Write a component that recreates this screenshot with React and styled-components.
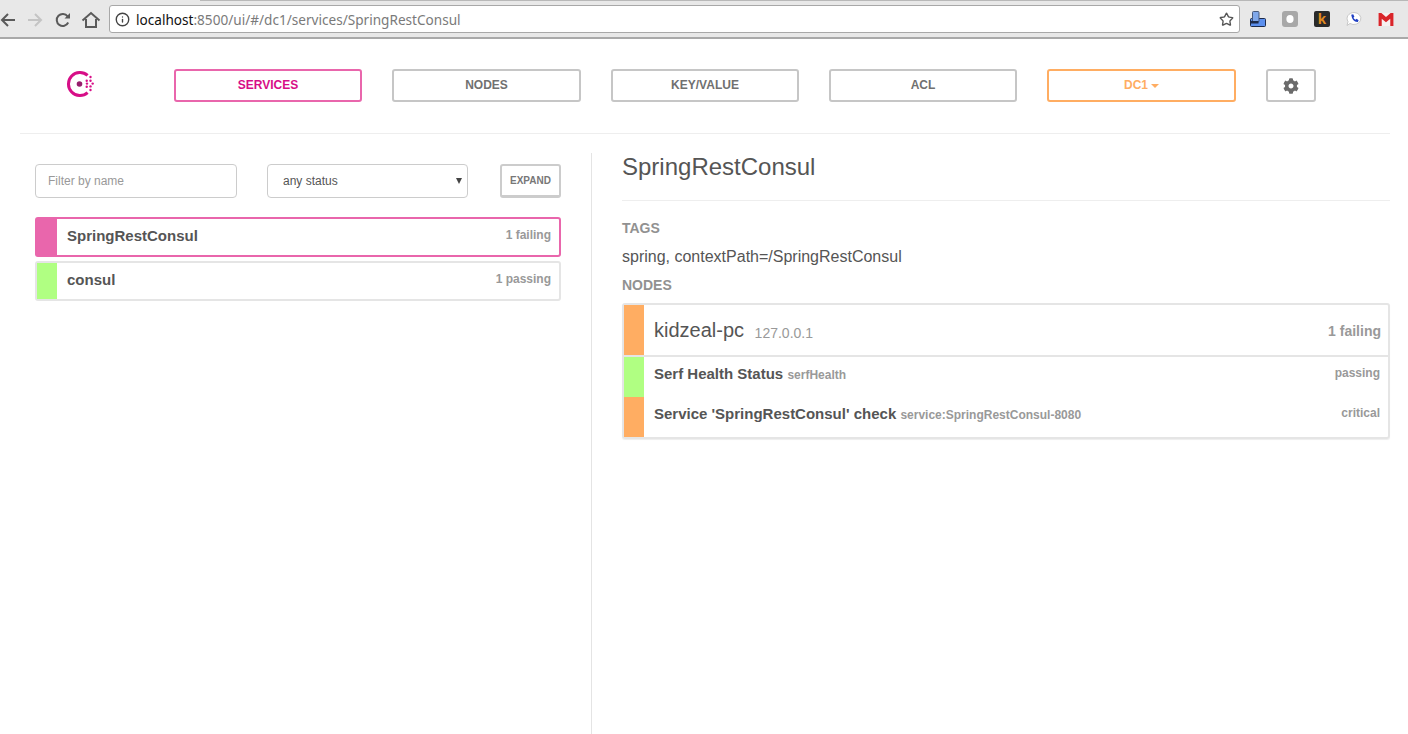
import React from "react";
import styled, { createGlobalStyle } from "styled-components";
import { Info, Star } from "lucide-react";
import { FaCog } from "react-icons/fa";

const Global = createGlobalStyle`
  html, body { margin: 0; padding: 0; background: #fff; }
  body { font-family: "Liberation Sans", Arial, sans-serif; color: #555; overflow: hidden; }
  * { box-sizing: border-box; }
`;

const Page = styled.div`
  width: 1408px;
  height: 734px;
  overflow: hidden;
`;

/* browser chrome */
const BrowserBar = styled.div`
  position: relative;
  height: 39px;
  background: #e8e8e8;
  border-top: 1px solid #b8b8b8;
  border-bottom: 2px solid #a9a9a9;
  display: flex;
  align-items: center;
  /* the active tab sits over the top line */
  &::before {
    content: "";
    position: absolute;
    left: 0;
    top: -1px;
    width: 200px;
    height: 1px;
    background: #e8e8e8;
  }
`;

const NavIcons = styled.div`
  width: 110px;
  margin-left: -1px;
  flex: none;
  display: flex;
  align-items: center;
  gap: 12px;
  padding: 1px 0 0 0;
`;

const NavGlyph = styled.svg`
  width: 16px;
  height: 16px;
  flex: none;
  fill: none;
  stroke: ${(p) => p.$color || "#5a5a5a"};
  stroke-width: 2;
`;

const UrlBox = styled.div`
  width: 1131px;
  height: 28px;
  flex: none;
  background: #fff;
  border: 1px solid #a8a8a8;
  border-radius: 3px;
  display: flex;
  align-items: center;
  padding: 0 5px;
  font-family: "Noto Sans", sans-serif;
  font-size: 13.6px;
`;

const Url = styled.span`
  flex: 1;
  margin-left: 6px;
  color: #7a7a7a;
  b { font-weight: 400; color: #111; }
`;

const Extensions = styled.div`
  flex: 1;
  display: flex;
  align-items: center;
  gap: 16px;
  padding-left: 10px;
`;

const ExtIcon = styled.svg`
  width: 16px;
  height: 16px;
  flex: none;
`;

const KIcon = styled.div`
  width: 16px;
  height: 16px;
  flex: none;
  border-radius: 2px;
  background: #2a2a2a;
  color: #e08a1e;
  font: 700 15px/15px "Liberation Sans", sans-serif;
  text-align: center;
`;

/* consul nav */
const Header = styled.header`
  margin: 0 18px 0 20px;
  height: 95px;
  padding-top: 30px;
  border-bottom: 1px solid #eee;
  display: flex;
  align-items: flex-start;
`;

const LogoWrap = styled.div`
  width: 154px;
  flex: none;
  padding: 1px 0 0 46px;
`;

const NavItems = styled.nav`
  display: flex;
  gap: 30px;
`;

const NavButton = styled.a`
  width: ${(p) => p.$w || 188}px;
  height: 33px;
  padding-bottom: ${(p) => p.$pad ?? 2}px;
  border: 2px solid ${(p) => p.$color || "#c6c6c6"};
  border-radius: 3px;
  color: ${(p) => p.$text || "#707070"};
  font-size: 12px;
  font-weight: 700;
  display: flex;
  align-items: center;
  justify-content: center;
`;

const Caret = styled.span`
  margin-left: 3px;
  margin-top: 2px;
  border-top: 4px solid #ffad62;
  border-left: 4px solid transparent;
  border-right: 4px solid transparent;
`;

/* two column body */
const Main = styled.main`
  margin: 19px 18px 0 20px;
  height: 581px;
  display: flex;
`;

const LeftCol = styled.section`
  width: 572px;
  flex: none;
  padding: 11px 30px 0 15px;
  border-right: 1px solid #e4e4e4;
`;

const FilterRow = styled.div`
  display: flex;
  align-items: flex-start;
  margin-bottom: 19px;
`;

const FilterInput = styled.input`
  width: 202px;
  height: 34px;
  padding: 0 12px;
  border: 1px solid #ccc;
  border-radius: 4px;
  font: 12px "Liberation Sans", sans-serif;
  color: #555;
  outline: none;
  &::placeholder { color: #999; opacity: 1; }
`;

const SelectWrap = styled.div`
  position: relative;
  width: 201px;
  margin-left: 30px;
  &::after {
    content: "";
    position: absolute;
    right: 6px;
    top: 14px;
    border-top: 6px solid #444;
    border-left: 3.5px solid transparent;
    border-right: 3.5px solid transparent;
    pointer-events: none;
  }
`;

const StatusSelect = styled.select`
  width: 100%;
  height: 34px;
  padding: 0 15px;
  border: 1px solid #ccc;
  border-radius: 4px;
  background: #fff;
  appearance: none;
  font: 12px "Liberation Sans", sans-serif;
  color: #555;
  outline: none;
`;

const ExpandButton = styled.button`
  width: 61px;
  height: 34px;
  margin-left: 32px;
  padding: 0;
  background: #fff;
  border: 2px solid #ccc;
  border-bottom-width: 3px;
  border-radius: 3px;
  color: #777;
  font: 700 10px "Liberation Sans", sans-serif;
`;

const ServiceList = styled.div`
  display: flex;
  flex-direction: column;
  gap: 4px;
`;

const ServiceRow = styled.div`
  height: 40px;
  display: flex;
  align-items: stretch;
  border: 2px solid ${(p) => (p.$active ? "#e966ac" : "#e5e5e5")};
  border-radius: 3px;
`;

const Stripe = styled.div`
  width: 20px;
  flex: none;
  background: ${(p) => p.$color};
`;

const ServiceName = styled.div`
  flex: 1;
  padding-left: 10px;
  font-size: 15px;
  font-weight: 700;
  line-height: 34px;
`;

const ServiceStatus = styled.div`
  padding-right: 8px;
  font-size: 12px;
  font-weight: 700;
  line-height: 32px;
  color: #999;
`;

const RightCol = styled.section`
  flex: 1;
  padding-left: 30px;
`;

const Title = styled.h2`
  margin: 0;
  height: 48px;
  font-size: 24px;
  font-weight: 400;
  line-height: 28px;
  border-bottom: 1px solid #eee;
`;

const SectionLabel = styled.h4`
  margin: ${(p) => p.$top}px 0 0;
  font-size: 14px;
  font-weight: 700;
  line-height: 16px;
  color: #919191;
`;

const Tags = styled.p`
  margin: 12px 0 0;
  font-size: 16px;
  line-height: 18px;
`;

const NodeCard = styled.div`
  margin-top: 10px;
  border: 2px solid #e5e5e5;
  border-radius: 3px;
  box-shadow: 0 1px 1px #eee;
`;

const NodeHead = styled.div`
  height: 52px;
  display: flex;
  border-bottom: 2px solid #e5e5e5;
`;

const NodeName = styled.div`
  flex: 1;
  padding-left: 10px;
  font-size: 20px;
  line-height: 50px;
  span {
    margin-left: 5px;
    font-size: 14px;
    color: #999;
    position: relative;
    top: 1px;
  }
`;

const NodeStatus = styled.div`
  padding-right: 7px;
  font-size: 14px;
  font-weight: 700;
  line-height: 52px;
  color: #999;
`;

const CheckRow = styled.div`
  height: 40px;
  display: flex;
`;

const CheckName = styled.div`
  flex: 1;
  padding-left: 10px;
  font-size: 15px;
  font-weight: 700;
  line-height: 34px;
  small {
    font-size: 12px;
    color: #999;
  }
`;

const CheckStatus = styled.div`
  padding-right: 8px;
  font-size: 12px;
  font-weight: 700;
  line-height: 32px;
  color: #999;
`;

const ORANGE = "#ffad62";
const GREEN = "#b0ff82";
const PINK = "#e966ac";

const logoDots = [
  [24.5, 7], [20.7, 10.7], [24.5, 10.7], [21, 13.6], [26.7, 13.6],
  [24.5, 16.4], [20.7, 16.8], [24.5, 20],
];

function ConsulLogo() {
  return (
    <svg width="28" height="28" viewBox="0 0 28 28" style={{ display: "block" }}>
      <path d="M21.6 5.4 A 11.5 11.5 0 1 0 21.6 22.6" fill="none" stroke="#d70e87" strokeWidth="3" />
      <circle cx="13.5" cy="14" r="2.8" fill="#961d6c" />
      {logoDots.map(([x, y]) => (
        <circle key={`${x}-${y}`} cx={x} cy={y} r="1.2" fill="#d70e87" />
      ))}
    </svg>
  );
}

function BackIcon() {
  return (
    <NavGlyph viewBox="0 0 16 16">
      <path d="M16 8 H3 M9 2 L3 8 L9 14" />
    </NavGlyph>
  );
}

function ForwardIcon() {
  return (
    <NavGlyph viewBox="0 0 16 16" $color="#c4c4c4">
      <path d="M1 8 H14 M8 2 L14 8 L8 14" />
    </NavGlyph>
  );
}

function ReloadIcon() {
  return (
    <NavGlyph viewBox="0 0 16 16" strokeWidth="2.4">
      <path d="M13.2 10.5 A6 6 0 1 1 12.6 4.4" />
      <path d="M9.5 6.5 H15 V1 Z" fill="#5a5a5a" stroke="none" />
    </NavGlyph>
  );
}

function HomeIcon() {
  return (
    <NavGlyph viewBox="0 0 16 16" style={{ overflow: "visible" }}>
      <path d="M-0.5 8.5 L8 1 L16.5 8.5 M3 7 V15 H13 V7" />
    </NavGlyph>
  );
}

function Extension1() {
  return (
    <ExtIcon viewBox="0 0 16 16">
      <rect x="0.5" y="7.5" width="15" height="8" rx="1" fill="#5b8fee" stroke="#1d2b4a" />
      <rect x="2.5" y="0.5" width="6.5" height="10.5" rx="1" fill="#80a8ea" stroke="#46587a" />
      <rect x="0.5" y="10" width="8" height="2.5" fill="#1d2b4a" />
    </ExtIcon>
  );
}

function Extension2() {
  return (
    <ExtIcon viewBox="0 0 16 16">
      <rect width="16" height="16" rx="3" fill="#a8a8a8" />
      <ellipse cx="8" cy="8" rx="3.6" ry="4" fill="#fff" />
    </ExtIcon>
  );
}

function Extension4() {
  return (
    <ExtIcon viewBox="0 0 16 16">
      <path d="M8 1.5 A7 6 0 1 1 4 12.5 L1 14.5 L2 10.5 A7 6 0 0 1 8 1.5Z" fill="#fff" stroke="#c8c8c8" />
      <path d="M5.2 3.8 L7.2 3.2 L8.4 5.8 L7.4 6.8 Q8.2 8.2 9.6 8.8 L10.6 7.8 L12.6 9.2 L11.8 11 Q6.4 11.4 5.2 3.8Z" fill="#1f3fc4" />
    </ExtIcon>
  );
}

function Extension5() {
  return (
    <ExtIcon viewBox="0 0 16 14" style={{ height: 13 }}>
      <rect width="16" height="14" fill="#f6f0f0" />
      <path d="M0 0 H3 L8 4.2 L13 0 H16 V14 H12.6 V6.2 L8 10 L3.4 6.2 V14 H0Z" fill="#d9252a" />
    </ExtIcon>
  );
}

export default function App() {
  return (
    <Page>
      <Global />
      <BrowserBar>
        <NavIcons>
          <BackIcon />
          <ForwardIcon />
          <ReloadIcon />
          <HomeIcon />
        </NavIcons>
        <UrlBox>
          <Info size={15} color="#444" strokeWidth={2.2} />
          <Url><b>localhost</b>:8500/ui/#/dc1/services/SpringRestConsul</Url>
          <Star size={15} color="#555" strokeWidth={2.2} />
        </UrlBox>
        <Extensions>
          <Extension1 />
          <Extension2 />
          <KIcon>k</KIcon>
          <Extension4 />
          <Extension5 />
        </Extensions>
      </BrowserBar>

      <Header>
        <LogoWrap><ConsulLogo /></LogoWrap>
        <NavItems>
          <NavButton $color={PINK} $text="#d70e87">SERVICES</NavButton>
          <NavButton $w={189}>NODES</NavButton>
          <NavButton>KEY/VALUE</NavButton>
          <NavButton>ACL</NavButton>
          <NavButton $w={189} $color={ORANGE} $text={ORANGE} $pad={1}>DC1<Caret /></NavButton>
          <NavButton $w={50} $pad={0}><FaCog size={16} color="#6b6b6b" /></NavButton>
        </NavItems>
      </Header>

      <Main>
        <LeftCol>
          <FilterRow>
            <FilterInput placeholder="Filter by name" />
            <SelectWrap>
              <StatusSelect defaultValue="any">
                <option value="any">any status</option>
                <option value="passing">passing</option>
                <option value="failing">failing</option>
              </StatusSelect>
            </SelectWrap>
            <ExpandButton>EXPAND</ExpandButton>
          </FilterRow>
          <ServiceList>
            <ServiceRow $active>
              <Stripe $color={PINK} />
              <ServiceName>SpringRestConsul</ServiceName>
              <ServiceStatus>1 failing</ServiceStatus>
            </ServiceRow>
            <ServiceRow>
              <Stripe $color={GREEN} />
              <ServiceName>consul</ServiceName>
              <ServiceStatus>1 passing</ServiceStatus>
            </ServiceRow>
          </ServiceList>
        </LeftCol>

        <RightCol>
          <Title>SpringRestConsul</Title>
          <SectionLabel $top={19}>TAGS</SectionLabel>
          <Tags>spring, contextPath=/SpringRestConsul</Tags>
          <SectionLabel $top={11}>NODES</SectionLabel>
          <NodeCard>
            <NodeHead>
              <Stripe $color={ORANGE} />
              <NodeName>kidzeal-pc <span>127.0.0.1</span></NodeName>
              <NodeStatus>1 failing</NodeStatus>
            </NodeHead>
            <CheckRow>
              <Stripe $color={GREEN} />
              <CheckName>Serf Health Status <small>serfHealth</small></CheckName>
              <CheckStatus>passing</CheckStatus>
            </CheckRow>
            <CheckRow>
              <Stripe $color={ORANGE} />
              <CheckName>Service 'SpringRestConsul' check <small>service:SpringRestConsul-8080</small></CheckName>
              <CheckStatus>critical</CheckStatus>
            </CheckRow>
          </NodeCard>
        </RightCol>
      </Main>
    </Page>
  );
}
